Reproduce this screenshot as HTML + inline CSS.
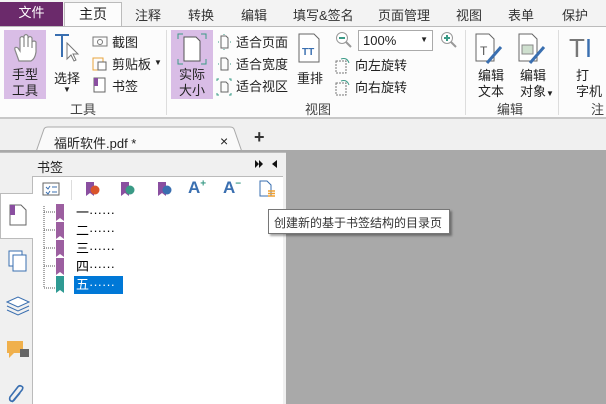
<!DOCTYPE html>
<html><head><meta charset="utf-8"><style>
*{margin:0;padding:0;box-sizing:border-box}
body{width:606px;height:404px;overflow:hidden;background:#f0f0f0;font-family:"Liberation Sans","Noto Sans CJK SC",sans-serif;font-size:12px;color:#222;position:relative}
.a{position:absolute;white-space:nowrap}
.tab{position:absolute;top:5px;font-size:13px;color:#333}
.ic{position:absolute}
</style></head><body>
<!-- tab bar -->
<div class="a" style="left:0;top:0;width:606px;height:26px;background:#f3f3f3"></div>
<div class="a" style="left:0;top:2px;width:63px;height:24px;background:#6b2a6b;color:#fff;font-size:13px;text-align:center;line-height:22px">文件</div>
<div class="a" style="left:64px;top:2px;width:58px;height:25px;background:#fcfcfc;border:1px solid #bbb;border-bottom:none;font-size:14px;text-align:center;line-height:22px">主页</div>
<div class="tab" style="left:135px">注释</div>
<div class="tab" style="left:188px">转换</div>
<div class="tab" style="left:241px">编辑</div>
<div class="tab" style="left:293px">填写&amp;签名</div>
<div class="tab" style="left:378px">页面管理</div>
<div class="tab" style="left:456px">视图</div>
<div class="tab" style="left:508px">表单</div>
<div class="tab" style="left:562px">保护</div>
<!-- ribbon -->
<div class="a" style="left:0;top:26px;width:606px;height:93px;background:#fcfcfc;border-top:1px solid #bbb;border-bottom:2px solid #c8c8c8"></div>
<div class="a" style="left:4px;top:30px;width:42px;height:69px;background:#d9bde6"></div>
<svg class="ic" style="left:12px;top:33px" width="26" height="30" viewBox="0 0 26 30"><path d="M7 28 L3 17 Q2 13 6 15 L8 18 L8 5 Q10 2 12 5 L12 14 L12 3 Q14 0 16 3 L16 14 L16 5 Q18 2 20 5 L20 15 L20 9 Q22 7 24 9 L24 19 Q23 26 19 28 Z" fill="#fff" stroke="#888" stroke-width="1.2"/></svg>
<div class="a" style="left:12px;top:67px;font-size:13px;line-height:16px">手型<br>工具</div>
<svg class="ic" style="left:53px;top:33px" width="28" height="30"><path d="M2 2H16M9 2V24" stroke="#3a6fb0" stroke-width="2" fill="none"/><path d="M14 10 L14 26 L18 22 L21 28 L23 27 L20 21 L25 21 Z" fill="#fff" stroke="#777"/></svg>
<div class="a" style="left:54px;top:68px;font-size:13px">选择</div>
<div class="a" style="left:63px;top:85px;font-size:8px">▼</div>
<svg class="ic" style="left:92px;top:35px" width="16" height="12"><rect x="1" y="2" width="14" height="9" fill="none" stroke="#777"/><circle cx="8" cy="7" r="2.5" fill="none" stroke="#777"/></svg>
<div class="a" style="left:112px;top:32px;font-size:13px">截图</div>
<svg class="ic" style="left:92px;top:55px" width="16" height="16"><rect x="1" y="3" width="10" height="12" fill="none" stroke="#e8a33c"/><rect x="6" y="7" width="8" height="8" fill="#fff" stroke="#666"/></svg>
<div class="a" style="left:112px;top:54px;font-size:13px">剪贴板</div>
<div class="a" style="left:154px;top:58px;font-size:8px">▼</div>
<svg class="ic" style="left:92px;top:77px" width="16" height="16"><rect x="2" y="1" width="11" height="14" fill="#fff" stroke="#666"/><rect x="2" y="1" width="4" height="8" fill="#8a4fa0"/></svg>
<div class="a" style="left:112px;top:76px;font-size:13px">书签</div>
<div class="a" style="left:70px;top:99px;font-size:13px;color:#444">工具</div>
<div class="a" style="left:166px;top:30px;width:1px;height:85px;background:#ddd"></div>
<div class="a" style="left:171px;top:30px;width:42px;height:69px;background:#d9bde6"></div>
<svg class="ic" style="left:177px;top:33px" width="30" height="32"><path d="M1 6V1H6M24 1H29V6M1 26V31H6M29 26V31H24" stroke="#3a9a86" fill="none"/><path d="M7 4H19L23 8V28H7Z" fill="#fff" stroke="#555"/></svg>
<div class="a" style="left:179px;top:67px;font-size:13px;line-height:16px">实际<br>大小</div>
<svg class="ic" style="left:216px;top:34px" width="16" height="66"><g fill="none" stroke="#666"><path d="M5 2H10L12 4V14H5Z"/><path d="M5 24H10L12 26V36H5Z"/><path d="M5 48H10L12 50V58H5Z"/></g><g stroke="#3a9a86" fill="none"><path d="M8 0V1M8 16V15M2 8H3M15 8H14"/><path d="M2 30H3M15 30H14"/><path d="M1 47V45H3M15 47V45H13M1 59V61H3M15 59V61H13"/></g></svg>
<div class="a" style="left:236px;top:32px;font-size:13px">适合页面</div>
<div class="a" style="left:236px;top:54px;font-size:13px">适合宽度</div>
<div class="a" style="left:236px;top:76px;font-size:13px">适合视区</div>
<svg class="ic" style="left:297px;top:33px" width="24" height="30"><path d="M2 1H17L22 6V29H2Z" fill="#fff" stroke="#666"/><text x="5" y="22" font-size="10" font-weight="bold" fill="#3a6fb0" font-family="Liberation Sans">TT</text></svg>
<div class="a" style="left:297px;top:68px;font-size:13px">重排</div>
<svg class="ic" style="left:335px;top:31px" width="18" height="18"><circle cx="7" cy="7" r="5.5" fill="#fff" stroke="#999"/><path d="M4 7H10" stroke="#3a9a86" stroke-width="2"/><path d="M11 11L16 16" stroke="#999" stroke-width="2"/></svg>
<div class="a" style="left:358px;top:30px;width:75px;height:21px;background:#fff;border:1px solid #aaa;font-size:13px;padding:2px 4px">100%<span style="position:absolute;right:4px;top:4px;font-size:8px">▼</span></div>
<svg class="ic" style="left:440px;top:31px" width="18" height="18"><circle cx="7" cy="7" r="5.5" fill="#fff" stroke="#999"/><path d="M4 7H10M7 4V10" stroke="#3a9a86" stroke-width="2"/><path d="M11 11L16 16" stroke="#999" stroke-width="2"/></svg>
<svg class="ic" style="left:335px;top:56px" width="18" height="40"><g fill="none" stroke="#777" stroke-dasharray="2 1"><rect x="1" y="5" width="10" height="12"/><rect x="1" y="27" width="10" height="12"/></g><path d="M6 3Q12 1 14 7" stroke="#3a9a86" fill="none"/><path d="M6 25Q12 23 14 29" stroke="#3a9a86" fill="none"/></svg>
<div class="a" style="left:355px;top:55px;font-size:13px">向左旋转</div>
<div class="a" style="left:355px;top:77px;font-size:13px">向右旋转</div>
<div class="a" style="left:305px;top:99px;font-size:13px;color:#444">视图</div>
<div class="a" style="left:465px;top:30px;width:1px;height:85px;background:#ddd"></div>
<svg class="ic" style="left:475px;top:33px" width="30" height="32"><path d="M1 1H14L19 6V28H1Z" fill="#fff" stroke="#666"/><text x="5" y="22" font-size="12" fill="#555" font-family="Liberation Sans">T</text><path d="M12 30L26 14" stroke="#3a6fb0" stroke-width="3"/></svg>
<div class="a" style="left:478px;top:68px;font-size:13px;line-height:16px">编辑<br>文本</div>
<svg class="ic" style="left:518px;top:33px" width="30" height="32"><path d="M1 1H14L19 6V28H1Z" fill="#fff" stroke="#666"/><rect x="4" y="12" width="11" height="9" fill="#cfe0cf" stroke="#888"/><path d="M12 30L26 14" stroke="#3a6fb0" stroke-width="3"/></svg>
<div class="a" style="left:520px;top:68px;font-size:13px;line-height:16px">编辑<br>对象<span style="font-size:8px">▼</span></div>
<div class="a" style="left:497px;top:99px;font-size:13px;color:#444">编辑</div>
<div class="a" style="left:558px;top:30px;width:1px;height:85px;background:#ddd"></div>
<div class="a" style="left:569px;top:33px;font-size:26px;color:#777;font-weight:300">T<span style="color:#3a6fb0">I</span></div>
<div class="a" style="left:576px;top:68px;font-size:13px;line-height:16px">打<br>字机</div>
<div class="a" style="left:591px;top:99px;font-size:13px;color:#444">注</div>
<!-- doc tab -->
<svg class="ic" style="left:36px;top:126px" width="206" height="26"><path d="M0 26 L8 3 Q9 1 12 1 H194 Q197 1 198 3 L206 26" fill="#fafafa" stroke="#aaa"/></svg>
<div class="a" style="left:54px;top:133px;font-size:13px">福昕软件.pdf *</div>
<div class="a" style="left:220px;top:133px;font-size:14px">×</div>
<div class="a" style="left:254px;top:127px;font-size:18px;font-weight:bold;color:#333">+</div>
<!-- doc area -->
<div class="a" style="left:0;top:150px;width:606px;height:254px;background:#a9a9a9"></div>
<div class="a" style="left:0;top:152px;width:286px;height:252px;background:#f0f0f0;border-top:1px solid #bbb"></div>
<div class="a" style="left:37px;top:157px;font-size:13px">书签</div>
<svg class="ic" style="left:255px;top:159px" width="24" height="10"><path d="M0 1L4 5 0 9ZM4 1L8 5 4 9Z" fill="#111"/><path d="M22 1L17 5 22 9Z" fill="#111"/></svg>
<div class="a" style="left:32px;top:176px;width:251px;height:228px;background:#fff;border-top:1px solid #bbb;border-left:1px solid #bbb"></div>
<div class="a" style="left:0;top:193px;width:33px;height:46px;background:#fff;border:1px solid #bbb;border-right:none"></div>
<svg class="ic" style="left:9px;top:204px" width="18" height="22"><path d="M1 1H12L17 6V21H1Z" fill="#fff" stroke="#666"/><rect x="1" y="1" width="5" height="10" fill="#8a4fa0"/></svg>
<svg class="ic" style="left:8px;top:250px" width="20" height="22"><rect x="1" y="1" width="13" height="15" fill="#fff" stroke="#3a6fb0"/><rect x="5" y="5" width="13" height="16" fill="#fff" stroke="#3a6fb0"/></svg>
<svg class="ic" style="left:6px;top:296px" width="24" height="20"><path d="M1 6L12 1 23 6 12 11Z" fill="#fff" stroke="#3a6fb0"/><path d="M1 10L12 15 23 10M1 14L12 19 23 14" fill="none" stroke="#3a6fb0"/></svg>
<svg class="ic" style="left:6px;top:340px" width="24" height="22"><rect x="1" y="1" width="16" height="12" fill="#f0b04c"/><path d="M3 13L3 18 8 13Z" fill="#f0b04c"/><rect x="14" y="9" width="9" height="8" fill="#666"/></svg>
<svg class="ic" style="left:8px;top:384px" width="18" height="20"><path d="M4 18L14 6Q16 3 13 2Q11 1 9 4L2 13Q1 16 3 17Q5 18 7 15L12 9" fill="none" stroke="#3a6fb0" stroke-width="1.6"/></svg>
<!-- toolbar -->
<svg class="ic" style="left:42px;top:182px" width="20" height="14"><rect x="1" y="1" width="16" height="12" fill="#fff" stroke="#666"/><path d="M4 5L6 7 8 4M4 10L6 12 8 9M10 5H15M10 10H15" stroke="#3a6fb0" fill="none"/></svg>
<div class="a" style="left:71px;top:180px;width:1px;height:20px;background:#ddd"></div>
<svg class="ic" style="left:85px;top:181px" width="16" height="16"><path d="M1 1H9V15L5 12 1 15Z" fill="#8a4fa0"/><circle cx="10" cy="9" r="4.5" fill="#d9542b"/></svg>
<svg class="ic" style="left:120px;top:181px" width="16" height="16"><path d="M1 1H9V15L5 12 1 15Z" fill="#8a4fa0"/><circle cx="10" cy="9" r="4.5" fill="#3a9a86"/></svg>
<svg class="ic" style="left:157px;top:181px" width="16" height="16"><path d="M1 1H9V15L5 12 1 15Z" fill="#8a4fa0"/><circle cx="10" cy="9" r="4.5" fill="#3a6fb0"/></svg>
<div class="a" style="left:188px;top:178px;font-size:17px;font-weight:bold;color:#3a6fb0">A<sup style="font-size:10px;color:#3a9a86">+</sup></div>
<div class="a" style="left:223px;top:178px;font-size:17px;font-weight:bold;color:#3a6fb0">A<sup style="font-size:10px;color:#3a9a86">−</sup></div>
<svg class="ic" style="left:259px;top:180px" width="18" height="18"><path d="M1 1H8L12 5V16H1Z" fill="#fff" stroke="#3a6fb0"/><path d="M9 11H16M9 13.5H16M9 16H16" stroke="#f0a030" stroke-width="1.5"/></svg>
<!-- tree -->
<svg class="ic" style="left:40px;top:204px" width="40" height="90"><path d="M4 2V84M4 8H16M4 26H16M4 44H16M4 62H16M4 84H16" stroke="#555" stroke-dasharray="1 1" fill="none"/><g fill="#9c5fa0"><path d="M16 0H24V17L20 14 16 17Z"/><path d="M16 18H24V35L20 32 16 35Z"/><path d="M16 36H24V53L20 50 16 53Z"/><path d="M16 54H24V71L20 68 16 71Z"/></g><path d="M16 72H24V89L20 86 16 89Z" fill="#2f9a93"/></svg>
<div class="a" style="left:76px;top:202px;font-size:13px;color:#000">一······</div>
<div class="a" style="left:76px;top:220px;font-size:13px;color:#000">二······</div>
<div class="a" style="left:76px;top:238px;font-size:13px;color:#000">三······</div>
<div class="a" style="left:76px;top:256px;font-size:13px;color:#000">四······</div>
<div class="a" style="left:74px;top:276px;width:49px;height:18px;background:#0078d7;color:#fff;font-size:13px;padding-left:2px;line-height:17px">五······</div>
<!-- tooltip -->
<div class="a" style="left:268px;top:209px;width:182px;height:25px;background:#fff;border:1px solid #777;box-shadow:2px 2px 2px rgba(0,0,0,.35);font-size:12px;padding:4px 0 0 5px;color:#333">创建新的基于书签结构的目录页</div>
</body></html>
